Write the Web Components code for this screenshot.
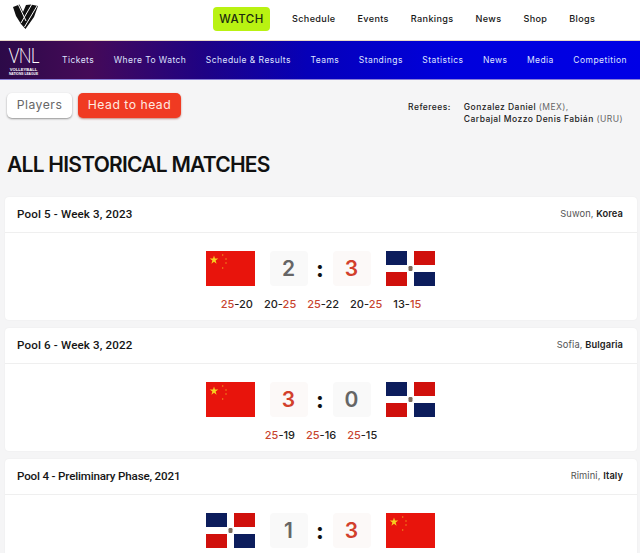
<!DOCTYPE html>
<html>
<head>
<meta charset="utf-8">
<title>All historical matches</title>
<style>
  html, body { margin: 0; padding: 0; height: 553px; overflow: hidden; }
  body { background: #f5f5f6; font-family: "Inter", "Liberation Sans", sans-serif; color: #111; }
  main-page { width: 640px; }
</style>
</head>
<body>
<main-page>
  <top-header></top-header>
  <sub-nav></sub-nav>
  <tool-bar></tool-bar>
  <h-title>ALL HISTORICAL MATCHES</h-title>
  <match-card pool="Pool 5 - Week 3, 2023" city="Suwon," country="Korea" home="cn" away="do" a="2" b="3" sets="25-20,20-25,25-22,20-25,13-15"></match-card>
  <match-card pool="Pool 6 - Week 3, 2022" city="Sofia," country="Bulgaria" home="cn" away="do" a="3" b="0" sets="25-19,25-16,25-15"></match-card>
  <match-card tight pool="Pool 4 - Preliminary Phase, 2021" city="Rimini," country="Italy" home="do" away="cn" a="1" b="3"></match-card>
</main-page>
<script>
class MainPage extends HTMLElement {
  constructor() {
    super();
    this.attachShadow({mode: 'open'}).innerHTML = `
      <style>:host { display: flex; flex-direction: column; }</style>
      <slot></slot>`;
  }
}

class TopHeader extends HTMLElement {
  constructor() {
    super();
    const links = ['Schedule', 'Events', 'Rankings', 'News', 'Shop', 'Blogs'];
    this.attachShadow({mode: 'open'}).innerHTML = `
      <style>
        :host { display: flex; align-items: center; height: 41px; background: #fff; padding-left: 13px; box-sizing: border-box; border-bottom: 1px solid #e8d8c8; }
        svg { display: block; width: 25px; height: 25px; margin-top: -7px; }
        .watch { margin-left: 175px; width: 57px; height: 24px; margin-top: -3px; background: #b9f212; border-radius: 4px; font-size: 11.5px; font-weight: 500; letter-spacing: .5px; display: flex; align-items: center; justify-content: center; color: #1b2a10; }
        nav { display: flex; gap: 22px; margin-left: 22px; margin-top: -3px; font-size: 9.1px; font-weight: 500; letter-spacing: .35px; color: #161616; }
      </style>
      <svg viewBox="0 0 25 25">
        <path fill="#111" d="M0 3 6.5 .5 10 8 13 1 18 .5 25 2 21 13 12.5 25 8 20 3 12Z"/>
        <path fill="none" stroke="#fff" stroke-width="1" d="M5.5 1 13 17M19 0 8 19M24 2 11.5 23"/>
      </svg>
      <div class="watch">WATCH</div>
      <nav>${links.map(l => `<span>${l}</span>`).join('')}</nav>`;
  }
}

class SubNav extends HTMLElement {
  constructor() {
    super();
    const links = ['Tickets', 'Where To Watch', 'Schedule & Results', 'Teams', 'Standings', 'Statistics', 'News', 'Media', 'Competition'];
    this.attachShadow({mode: 'open'}).innerHTML = `
      <style>
        :host { display: flex; align-items: center; height: 39px; box-sizing: border-box; padding-left: 9px; color: #dfe3ff; white-space: nowrap;
          background: linear-gradient(90deg, #2c0a48 0%, #450a58 14%, #1e0285 32%, #0600b8 48%, #0000dc 70%, #0000e6 100%);
          border-bottom: 1px solid #8a80d8; }
        .logo { width: 29px; display: flex; flex-direction: column; align-items: center; color: #fff; padding-top: 6px; }
        .vnl { font: 300 17px/18px "Lato", sans-serif; letter-spacing: -.8px; transform: scaleY(1.3); transform-origin: 50% 100%; }
        .tag { font: 700 4.1px/4.6px "Liberation Sans", sans-serif; text-align: center; margin-top: 1px; white-space: nowrap; }
        .tag small { font-size: 3.3px; line-height: 3.6px; display: block; }
        nav { display: flex; gap: 19.5px; margin-left: 24px; font-size: 8.5px; font-weight: 400; letter-spacing: .45px; }
      </style>
      <div class="logo"><div class="vnl">VNL</div><div class="tag">VOLLEYBALL<small>NATIONS LEAGUE</small></div></div>
      <nav>${links.map(l => `<span>${l.replace('&', '&amp;')}</span>`).join('')}</nav>`;
  }
}

class ToolBar extends HTMLElement {
  constructor() {
    super();
    this.attachShadow({mode: 'open'}).innerHTML = `
      <style>
        :host { display: flex; justify-content: space-between; align-items: flex-start; padding: 13px 17px 0 7px; height: 62px; box-sizing: border-box; }
        .tabs { display: flex; gap: 6px; }
        .tab { height: 25px; padding-bottom: 2px; display: flex; align-items: center; justify-content: center; border-radius: 5px; font-size: 12.2px; letter-spacing: .5px; box-sizing: border-box; }
        .off { width: 65px; background: #fff; color: #666; box-shadow: 0 1px 2px rgba(0,0,0,.4); }
        .on { width: 103px; background: #f03a22; color: #ffe9e0; box-shadow: 0 1px 2px rgba(150,30,10,.5); }
        .refs { display: flex; gap: 13px; font-size: 8.5px; font-weight: 500; line-height: 12px; letter-spacing: .45px; color: #222; margin-top: 8px; }
        .refs i { font-style: normal; font-weight: 400; color: #666; }
      </style>
      <div class="tabs"><div class="tab off">Players</div><div class="tab on">Head to head</div></div>
      <div class="refs"><div>Referees:</div><div>Gonzalez Daniel <i>(MEX),</i><br>Carbajal Mozzo Denis Fabián <i>(URU)</i></div></div>`;
  }
}

class HTitle extends HTMLElement {
  constructor() {
    super();
    this.attachShadow({mode: 'open'}).innerHTML = `
      <style>
        :host { display: block; padding: 0 0 0 7px; height: 55px; box-sizing: border-box; font-size: 21px; line-height: 45px; font-weight: 600; letter-spacing: -.75px; color: #111; white-space: nowrap; }
      </style>
      <slot></slot>`;
  }
}

class TeamFlag extends HTMLElement {
  connectedCallback() {
    const cn = `<svg viewBox="0 0 49 35" width="49" height="35">
        <rect width="49" height="35" fill="#e8140c"/>
        <polygon fill="#f5d020" points="8,4.5 9,7.6 12.3,7.6 9.6,9.6 10.6,12.8 8,10.8 5.4,12.8 6.4,9.6 3.7,7.6 7,7.6"/>
        <g fill="#f0a020"><circle cx="16.7" cy="4" r=".7"/><circle cx="20" cy="8" r=".7"/><circle cx="20" cy="12" r=".7"/><circle cx="16.7" cy="17" r=".7"/></g>
      </svg>`;
    const dr = `<svg viewBox="0 0 49 35" width="49" height="35">
        <rect width="49" height="35" fill="#fff"/>
        <rect x="0" y="0" width="21" height="14" fill="#0c1d5c"/><rect x="28" y="0" width="21" height="14" fill="#d0100c"/>
        <rect x="0" y="21" width="21" height="14" fill="#d0100c"/><rect x="28" y="21" width="21" height="14" fill="#0c1d5c"/>
        <rect x="22.5" y="15" width="4" height="5" rx="1.2" fill="#7a6a5a"/>
      </svg>`;
    this.attachShadow({mode: 'open'}).innerHTML = `
      <style>:host { display: block; width: 49px; height: 35px; } svg { display: block; }</style>
      ${this.getAttribute('code') === 'cn' ? cn : dr}`;
  }
}

class MatchCard extends HTMLElement {
  connectedCallback() {
    const a = +this.getAttribute('a'), b = +this.getAttribute('b');
    const sets = (this.getAttribute('sets') || '').split(',').filter(Boolean).map(s => {
      const [x, y] = s.split('-');
      return `<span><b class="${+x > +y ? 'w' : ''}">${x}</b>-<b class="${+y > +x ? 'w' : ''}">${y}</b></span>`;
    }).join('');
    this.attachShadow({mode: 'open'}).innerHTML = `
      <style>
        :host { display: block; margin: 0 3px 8px 5px; height: 123px; background: #fff; border-radius: 4px; box-shadow: 0 0 2px rgba(0,0,0,.06); flex: none; }
        header { height: 36px; box-sizing: border-box; border-bottom: 1px solid #efefef; display: flex; justify-content: space-between; align-items: center; padding: 0 14px 2px 12px; }
        .pool { font-family: "Roboto", sans-serif; font-size: 11.6px; font-weight: 500; letter-spacing: .15px; color: #151515; }
        :host([tight]) .pool { letter-spacing: -.17px; }
        .place { font-size: 9.3px; color: #555; letter-spacing: .1px; }
        .place b { font-weight: 600; color: #222; }
        .score { display: flex; justify-content: center; align-items: center; gap: 15px; margin: 18px 2px 0 0; }
        .num { width: 38px; height: 35px; display: flex; align-items: center; justify-content: center; background: #f9f9f9; border-radius: 4px; font-size: 21px; font-weight: 600; color: #666; }
        .num.w { color: #d2402c; background: #fcf9f8; }
        .sep { font-size: 22px; font-weight: 800; color: #111; width: 10px; text-align: center; margin: 0 -7.5px; }
        .sets { display: flex; justify-content: center; gap: 11px; margin: 11px 0 0; font-size: 11px; font-weight: 500; color: #222; }
        .sets b { font-weight: 500; }
        .sets b.w { color: #c8452f; }
      </style>
      <header><div class="pool">${this.getAttribute('pool')}</div><div class="place">${this.getAttribute('city')} <b>${this.getAttribute('country')}</b></div></header>
      <div class="score">
        <team-flag code="${this.getAttribute('home')}"></team-flag>
        <div class="num ${a > b ? 'w' : ''}">${a}</div>
        <div class="sep">:</div>
        <div class="num ${b > a ? 'w' : ''}">${b}</div>
        <team-flag code="${this.getAttribute('away')}"></team-flag>
      </div>
      <div class="sets">${sets}</div>`;
  }
}

customElements.define('main-page', MainPage);
customElements.define('top-header', TopHeader);
customElements.define('sub-nav', SubNav);
customElements.define('tool-bar', ToolBar);
customElements.define('h-title', HTitle);
customElements.define('team-flag', TeamFlag);
customElements.define('match-card', MatchCard);
</script>
</body>
</html>
